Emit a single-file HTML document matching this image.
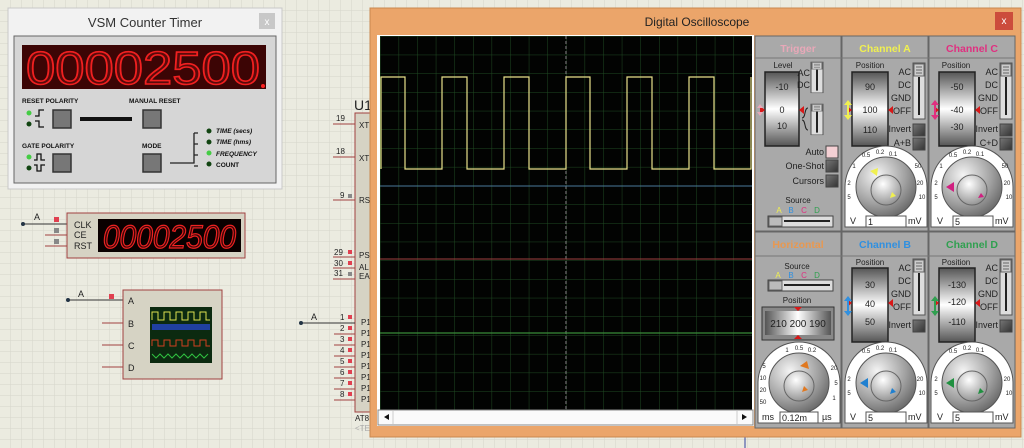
<!DOCTYPE html>
<html><head><meta charset="utf-8"><style>
html,body{margin:0;padding:0;width:1024px;height:448px;overflow:hidden;background:#ebebe0}
svg{display:block;font-family:"Liberation Sans",sans-serif}
</style></head><body>
<svg width="1024" height="448" viewBox="0 0 1024 448" xmlns="http://www.w3.org/2000/svg">
<defs>
<pattern id="g" width="11" height="11" patternUnits="userSpaceOnUse"><path d="M11 0V11H0" fill="none" stroke="#d6d6ca" stroke-width="1"/></pattern>
<pattern id="sg" x="380" y="36" width="18.6" height="18.7" patternUnits="userSpaceOnUse"><path d="M0 0V18.7M0 0H18.6" fill="none" stroke="#1f4a22" stroke-width="1"/></pattern>
<linearGradient id="vs" x1="0" y1="0" x2="0" y2="1"><stop offset="0" stop-color="#555"/><stop offset=".5" stop-color="#fff"/><stop offset="1" stop-color="#555"/></linearGradient>
<linearGradient id="hs" x1="0" y1="0" x2="1" y2="0"><stop offset="0" stop-color="#555"/><stop offset=".5" stop-color="#fff"/><stop offset="1" stop-color="#555"/></linearGradient>
<radialGradient id="kn" cx=".35" cy=".3" r=".8"><stop offset="0" stop-color="#f4f4f4"/><stop offset=".6" stop-color="#a0a0a0"/><stop offset="1" stop-color="#606060"/></radialGradient>
<radialGradient id="kc" cx=".4" cy=".3" r=".8"><stop offset="0" stop-color="#fff"/><stop offset="1" stop-color="#888"/></radialGradient>
<linearGradient id="bt" x1="0" y1="0" x2="1" y2="1"><stop offset="0" stop-color="#777"/><stop offset="1" stop-color="#333"/></linearGradient>
<g id="knob">
<path d="M-41 40V0A41 41 0 0 1 41 0V40Z" fill="#fff" stroke="#555"/>
<circle r="30" fill="url(#kn)" stroke="#555"/>
<circle r="15" cy="3" fill="url(#kc)" stroke="#666"/>
</g>
<g id="vslide"><rect width="12" height="56" fill="#ddd" stroke="#555"/><line x1="6" y1="14" x2="6" y2="52" stroke="#222" stroke-width="2"/><rect x="1" y="1" width="10" height="12" fill="#ccc" stroke="#666"/><path d="M3 4H9M3 7H9M3 10H9" stroke="#666"/></g>
</defs>
<rect width="1024" height="448" fill="url(#g)"/>
<line x1="745" y1="428" x2="745" y2="448" stroke="#3040a0"/>

<g font-size="9" fill="#222">
<line x1="22" y1="224" x2="67" y2="224" stroke="#333"/><circle cx="23" cy="224" r="2" fill="#234"/>
<text x="34" y="220">A</text><rect x="54" y="217" width="5" height="5" fill="#e04050"/>
<rect x="54" y="228" width="5" height="5" fill="#888"/><rect x="54" y="239" width="5" height="5" fill="#888"/>
<line x1="45" y1="235" x2="67" y2="235" stroke="#a04040"/><line x1="45" y1="246" x2="67" y2="246" stroke="#a04040"/>
<rect x="67" y="213" width="178" height="45" fill="#d6d3c4" stroke="#a04040"/>
<text x="74" y="228">CLK</text><text x="74" y="238">CE</text><text x="74" y="249">RST</text>
<rect x="98" y="219" width="143" height="33" fill="#0a0000"/>
<text x="103" y="248" font-size="32" fill="#3a0606" stroke="#e22" stroke-width="1.2" textLength="133" lengthAdjust="spacingAndGlyphs" font-style="italic">00002500</text>

<line x1="67" y1="300" x2="123" y2="300" stroke="#333"/><circle cx="68" cy="300" r="2" fill="#234"/>
<text x="78" y="297">A</text><rect x="109" y="294" width="5" height="5" fill="#e04050"/>
<line x1="102" y1="323" x2="123" y2="323" stroke="#a04040"/><line x1="102" y1="345" x2="123" y2="345" stroke="#a04040"/><line x1="102" y1="367" x2="123" y2="367" stroke="#a04040"/>
<rect x="123" y="290" width="99" height="89" fill="#d6d3c4" stroke="#a04040"/>
<text x="128" y="304">A</text><text x="128" y="327">B</text><text x="128" y="349">C</text><text x="128" y="371">D</text>
<rect x="150" y="307" width="62" height="56" fill="#0c2a10"/>
<path d="M152 320V312H158V320H164V312H170V320H176V312H182V320H188V312H194V320H200V312H206V320H210" fill="none" stroke="#dde050"/>
<rect x="152" y="324" width="58" height="6" fill="#2040a0"/>
<path d="M152 346V340H158V346H164V340H170V346H176V340H182V346H188V340H194V346H200V340H206V346H210" fill="none" stroke="#d04020"/>
<path d="M152 354L156 358L160 354L164 358L168 354L172 358L176 354L180 358L184 354L188 358L192 354L196 358L200 354L204 358L208 354" fill="none" stroke="#30c040"/>

<text x="354" y="110" font-size="14">U1</text>
<rect x="355" y="113" width="20" height="299" fill="#d6d3c4" stroke="#a04040"/>
<text x="359" y="128" font-size="8">XT</text><text x="359" y="161" font-size="8">XT</text><text x="359" y="203" font-size="8">RS</text>
<text x="359" y="258" font-size="8">PS</text><text x="359" y="270" font-size="8">AL</text><text x="359" y="279" font-size="8">EA</text>
<line x1="333" y1="124" x2="355" y2="124" stroke="#a04040"/><text x="336" y="121" font-size="8">19</text>
<line x1="333" y1="157" x2="355" y2="157" stroke="#a04040"/><text x="336" y="154" font-size="8">18</text>
<line x1="333" y1="200" x2="355" y2="200" stroke="#a04040"/><text x="340" y="198" font-size="8">9</text><rect x="348" y="194" width="4" height="4" fill="#888"/>
<g font-size="8">
<text x="334" y="255">29</text><rect x="348" y="250" width="4" height="4" fill="#e04050"/><line x1="333" y1="257" x2="355" y2="257" stroke="#a04040"/>
<text x="334" y="266">30</text><rect x="348" y="261" width="4" height="4" fill="#e04050"/><line x1="333" y1="268" x2="355" y2="268" stroke="#a04040"/>
<text x="334" y="276">31</text><rect x="348" y="272" width="4" height="4" fill="#888"/><line x1="333" y1="279" x2="355" y2="279" stroke="#a04040"/>
</g>
<line x1="300" y1="323" x2="355" y2="323" stroke="#333"/><circle cx="301" cy="323" r="2" fill="#234"/><text x="311" y="320">A</text>
<g font-size="8">
<text x="340" y="320">1</text><text x="340" y="331">2</text><text x="340" y="342">3</text><text x="340" y="353">4</text><text x="340" y="364">5</text><text x="340" y="375">6</text><text x="340" y="386">7</text><text x="340" y="397">8</text>
<text x="361" y="325">P1</text><text x="361" y="336">P1</text><text x="361" y="347">P1</text><text x="361" y="358">P1</text><text x="361" y="369">P1</text><text x="361" y="380">P1</text><text x="361" y="391">P1</text><text x="361" y="402">P1</text>
<text x="355" y="421" font-size="8">AT8</text><text x="355" y="431" font-size="8" fill="#aaa">&lt;TE</text>
</g>
<g fill="#e04050"><rect x="348" y="315" width="4" height="4"/><rect x="348" y="326" width="4" height="4"/><rect x="348" y="337" width="4" height="4"/><rect x="348" y="348" width="4" height="4"/><rect x="348" y="359" width="4" height="4"/><rect x="348" y="370" width="4" height="4"/><rect x="348" y="381" width="4" height="4"/><rect x="348" y="392" width="4" height="4"/></g>
<g stroke="#a04040"><line x1="334" y1="334" x2="355" y2="334"/><line x1="334" y1="345" x2="355" y2="345"/><line x1="334" y1="356" x2="355" y2="356"/><line x1="334" y1="367" x2="355" y2="367"/><line x1="334" y1="378" x2="355" y2="378"/><line x1="334" y1="389" x2="355" y2="389"/><line x1="334" y1="400" x2="355" y2="400"/></g>
</g>

<rect x="8" y="8" width="274" height="181" fill="#f2f2f2" stroke="#c8c8c8"/>
<text x="145" y="27" font-size="13" text-anchor="middle" fill="#333">VSM Counter Timer</text>
<rect x="259" y="13" width="16" height="16" fill="#c8c8c8"/><text x="267" y="25" font-size="10" fill="#fff" text-anchor="middle">x</text>
<rect x="14" y="36" width="262" height="147" fill="#d6d6d6" stroke="#666"/>
<rect x="22" y="45" width="244" height="44" fill="#3c0505"/>
<text x="26" y="84" font-size="46" fill="#5a0a0a" stroke="#f02020" stroke-width="1.6" textLength="234" lengthAdjust="spacingAndGlyphs">00002500</text>
<circle cx="263" cy="86" r="2" fill="#f22"/>
<g font-size="6.5" font-weight="bold" fill="#111">
<text x="22" y="103">RESET POLARITY</text><text x="129" y="103">MANUAL RESET</text>
<text x="22" y="148">GATE POLARITY</text><text x="142" y="148">MODE</text>
<text x="216" y="133" font-style="italic">TIME (secs)</text><text x="216" y="144" font-style="italic">TIME (hms)</text>
<text x="216" y="156" font-style="italic">FREQUENCY</text><text x="216" y="167">COUNT</text>
</g>
<g stroke="#333" stroke-width="1.5" fill="#777">
<rect x="53" y="110" width="18" height="18"/><rect x="143" y="110" width="18" height="18"/>
<rect x="53" y="154" width="18" height="18"/><rect x="143" y="154" width="18" height="18"/>
</g>
<rect x="80" y="117" width="52" height="4" fill="#111"/>
<circle cx="29" cy="113" r="2.5" fill="#4c4"/><circle cx="29" cy="124" r="2.5" fill="#141"/>
<circle cx="29" cy="157" r="2.5" fill="#4c4"/><circle cx="29" cy="168" r="2.5" fill="#141"/>
<path d="M35 116H39V110H44M35 121H39V127H44M34 160H37V154H41V160H45M34 165H37V171H41V165H45" fill="none" stroke="#111" stroke-width="1.3"/>
<path d="M170 163H194V133M194 133H198M194 144H198M194 155H198M194 166H198" fill="none" stroke="#222" stroke-width="1.3"/>
<circle cx="209" cy="131" r="2.5" fill="#141"/><circle cx="209" cy="142" r="2.5" fill="#141"/><circle cx="209" cy="153" r="2.5" fill="#4c4"/><circle cx="209" cy="164" r="2.5" fill="#141"/>

<rect x="370" y="8" width="651" height="429" fill="#eba56a" stroke="#c8884f"/>
<text x="697" y="26" font-size="12" text-anchor="middle" fill="#222">Digital Oscilloscope</text>
<rect x="995" y="12" width="18" height="18" fill="#cc4c3c"/><text x="1004" y="24" font-size="10" fill="#fff" text-anchor="middle">x</text>
<rect x="377" y="35" width="377" height="391" fill="#fff"/>
<rect x="380" y="36" width="372" height="374" fill="#020302"/>
<rect x="380" y="36" width="372" height="374" fill="url(#sg)"/>
<line x1="566" y1="36" x2="566" y2="410" stroke="#888" stroke-dasharray="3,2"/>
<line x1="380" y1="186" x2="752" y2="186" stroke="#4a7a9a"/>
<line x1="380" y1="259" x2="752" y2="259" stroke="#a04040"/>
<line x1="380" y1="333" x2="752" y2="333" stroke="#3a8a3a" stroke-width="1.2"/>
<path d="M381 169V77H405V169H442V77H467V169H504V77H529V169H566V77H590V169H627V77H652V169H689V77H714V169H751V77" fill="none" stroke="#e8e08a" stroke-width="1.2"/>
<rect x="378" y="410" width="375" height="15" fill="#fafafa" stroke="#888"/>
<path d="M384 417L389 414V420Z M747 417L742 414V420Z" fill="#111"/>
<line x1="393" y1="411" x2="393" y2="424" stroke="#ccc"/><line x1="737" y1="411" x2="737" y2="424" stroke="#ccc"/>

<g stroke="#666">
<rect x="755" y="36" width="86" height="195" fill="#a9a9a9"/><rect x="842" y="36" width="86" height="195" fill="#a9a9a9"/><rect x="929" y="36" width="86" height="195" fill="#a9a9a9"/>
<rect x="755" y="232" width="86" height="196" fill="#a9a9a9"/><rect x="842" y="232" width="86" height="196" fill="#a9a9a9"/><rect x="929" y="232" width="86" height="196" fill="#a9a9a9"/>
</g>
<g stroke="#777" stroke-width="1"><line x1="755" y1="58" x2="1015" y2="58"/><line x1="755" y1="256" x2="1015" y2="256"/></g>
<g font-size="10.5" font-weight="bold" text-anchor="middle">
<text x="798" y="52" fill="#e8a8b8">Trigger</text><text x="885" y="52" fill="#f0f050">Channel A</text><text x="972" y="52" fill="#e03080">Channel C</text>
<text x="798" y="248" fill="#e89850">Horizontal</text><text x="885" y="248" fill="#3090e0">Channel B</text><text x="972" y="248" fill="#30a050">Channel D</text>
</g>

<g font-size="8" fill="#222" text-anchor="middle">
<text x="783" y="68">Level</text><text x="870" y="68">Position</text><text x="956" y="68">Position</text>
<text x="870" y="265">Position</text><text x="956" y="265">Position</text>
</g>
<g stroke="#222" stroke-width="1.5">
<rect x="765" y="72" width="34" height="74" fill="url(#vs)"/><rect x="852" y="72" width="36" height="74" fill="url(#vs)"/><rect x="939" y="72" width="36" height="74" fill="url(#vs)"/>
<rect x="852" y="268" width="36" height="74" fill="url(#vs)"/><rect x="939" y="268" width="36" height="74" fill="url(#vs)"/>
</g>
<g font-size="9" fill="#222" text-anchor="middle">
<text x="782" y="90">-10</text><text x="782" y="113">0</text><text x="782" y="129">10</text>
<text x="870" y="90">90</text><text x="870" y="113">100</text><text x="870" y="133">110</text>
<text x="957" y="90">-50</text><text x="957" y="113">-40</text><text x="957" y="130">-30</text>
<text x="870" y="288">30</text><text x="870" y="307">40</text><text x="870" y="325">50</text>
<text x="957" y="288">-130</text><text x="957" y="305">-120</text><text x="957" y="325">-110</text>
</g>
<g fill="#d81818">
<path d="M765 110l-5-4v8zM799 110l5-4v8zM852 110l-5-4v8zM888 110l5-4v8zM939 110l-5-4v8zM975 110l5-4v8zM852 303l-5-4v8zM888 303l5-4v8zM939 303l-5-4v8zM975 303l5-4v8z"/>
</g>
<path d="M848 100l-4 5h8zM848 120l-4-5h8z" fill="#f0f050"/><rect x="847" y="104" width="2" height="12" fill="#f0f050"/>
<path d="M935 100l-4 5h8zM935 120l-4-5h8z" fill="#e03080"/><rect x="934" y="104" width="2" height="12" fill="#e03080"/>
<path d="M848 296l-4 5h8zM848 316l-4-5h8z" fill="#3090e0"/><rect x="847" y="300" width="2" height="12" fill="#3090e0"/>
<path d="M935 296l-4 5h8zM935 316l-4-5h8z" fill="#30a050"/><rect x="934" y="300" width="2" height="12" fill="#30a050"/>
<path d="M760 104l-3 4h6zM760 116l-3-4h6z" fill="#e8a8b8"/>

<use href="#vslide" x="913" y="63"/><use href="#vslide" x="1000" y="63"/>
<use href="#vslide" x="913" y="259"/><use href="#vslide" x="1000" y="259"/>
<g transform="translate(811 62) scale(1 .55)"><use href="#vslide"/></g>
<g transform="translate(811 104) scale(1 .55)"><use href="#vslide"/></g>
<path d="M808 108c-4 0-2 10-6 10M802 120c4 0 2 10 6 10" fill="none" stroke="#222"/>
<g font-size="9" fill="#222" text-anchor="end">
<text x="810" y="76">AC</text><text x="810" y="88">DC</text>
<text x="911" y="75">AC</text><text x="911" y="88">DC</text><text x="911" y="101">GND</text><text x="911" y="114">OFF</text>
<text x="998" y="75">AC</text><text x="998" y="88">DC</text><text x="998" y="101">GND</text><text x="998" y="114">OFF</text>
<text x="911" y="271">AC</text><text x="911" y="284">DC</text><text x="911" y="297">GND</text><text x="911" y="310">OFF</text>
<text x="998" y="271">AC</text><text x="998" y="284">DC</text><text x="998" y="297">GND</text><text x="998" y="310">OFF</text>
<text x="911" y="132">Invert</text><text x="911" y="146">A+B</text>
<text x="998" y="132">Invert</text><text x="998" y="146">C+D</text>
<text x="911" y="328">Invert</text><text x="998" y="328">Invert</text>
<text x="824" y="155">Auto</text><text x="824" y="169">One-Shot</text><text x="824" y="184">Cursors</text>
</g>
<g stroke="#444">
<rect x="913" y="124" width="12" height="12" fill="url(#bt)"/><rect x="913" y="138" width="12" height="12" fill="url(#bt)"/>
<rect x="1000" y="124" width="12" height="12" fill="url(#bt)"/><rect x="1000" y="138" width="12" height="12" fill="url(#bt)"/>
<rect x="913" y="320" width="12" height="12" fill="url(#bt)"/><rect x="1000" y="320" width="12" height="12" fill="url(#bt)"/>
<rect x="826" y="146" width="12" height="12" fill="#f4d0d4"/><rect x="826" y="160" width="12" height="12" fill="url(#bt)"/><rect x="826" y="175" width="12" height="12" fill="url(#bt)"/>
</g>
<g font-size="8" text-anchor="middle">
<text x="798" y="203" fill="#222">Source</text>
<text x="779" y="213" fill="#f0f050">A</text><text x="791" y="213" fill="#3090e0">B</text><text x="804" y="213" fill="#e03080">C</text><text x="817" y="213" fill="#30a050">D</text>
<text x="797" y="269" fill="#222">Source</text>
<text x="778" y="278" fill="#f0f050">A</text><text x="791" y="278" fill="#3090e0">B</text><text x="804" y="278" fill="#e03080">C</text><text x="817" y="278" fill="#30a050">D</text>
<text x="797" y="303" fill="#222">Position</text>
</g>
<g stroke="#444"><rect x="768" y="216" width="65" height="11" fill="#ddd"/><rect x="768" y="280" width="65" height="11" fill="#ddd"/></g>
<rect x="769" y="217" width="13" height="9" fill="#bbb" stroke="#666"/><rect x="769" y="281" width="13" height="9" fill="#bbb" stroke="#666"/>
<line x1="784" y1="221" x2="830" y2="221" stroke="#222" stroke-width="2"/><line x1="784" y1="285" x2="830" y2="285" stroke="#222" stroke-width="2"/>
<rect x="762" y="307" width="72" height="33" fill="#888" stroke="#333"/>
<rect x="765" y="311" width="66" height="24" fill="url(#hs)"/>
<text x="798" y="327" font-size="10" text-anchor="middle" fill="#222">210 200 190</text>
<path d="M798 311l-4-4h8zM798 335l-4 4h8z" fill="#d81818"/>

<use href="#knob" x="886" y="187"/><use href="#knob" x="972" y="187"/>
<use href="#knob" x="886" y="383"/><use href="#knob" x="972" y="383"/><use href="#knob" x="799" y="383"/>
<g stroke="#555" fill="#fff">
<rect x="866" y="216" width="40" height="11"/><rect x="953" y="216" width="40" height="11"/>
<rect x="866" y="412" width="40" height="11"/><rect x="953" y="412" width="40" height="11"/><rect x="780" y="412" width="38" height="11"/>
</g>
<g font-size="9" fill="#222">
<text x="868" y="225">1</text><text x="955" y="225">5</text><text x="868" y="421">5</text><text x="955" y="421">5</text><text x="782" y="421">0.12m</text>
<text x="850" y="224">V</text><text x="908" y="224">mV</text><text x="937" y="224">V</text><text x="995" y="224">mV</text>
<text x="850" y="420">V</text><text x="908" y="420">mV</text><text x="937" y="420">V</text><text x="995" y="420">mV</text>
<text x="762" y="420">ms</text><text x="822" y="420">µs</text>
</g>
<g font-size="6" fill="#222" text-anchor="middle">
<text x="866" y="157">0.5</text><text x="880" y="154">0.2</text><text x="893" y="156">0.1</text><text x="854" y="168">1</text><text x="849" y="185">2</text><text x="849" y="199">5</text><text x="920" y="185">20</text><text x="922" y="199">10</text><text x="918" y="168">50</text>
<text x="953" y="157">0.5</text><text x="967" y="154">0.2</text><text x="980" y="156">0.1</text><text x="941" y="168">1</text><text x="936" y="185">2</text><text x="936" y="199">5</text><text x="1007" y="185">20</text><text x="1009" y="199">10</text><text x="1005" y="168">50</text>
<text x="866" y="353">0.5</text><text x="880" y="350">0.2</text><text x="893" y="352">0.1</text><text x="849" y="381">2</text><text x="849" y="395">5</text><text x="920" y="381">20</text><text x="922" y="395">10</text>
<text x="953" y="353">0.5</text><text x="967" y="350">0.2</text><text x="980" y="352">0.1</text><text x="936" y="381">2</text><text x="936" y="395">5</text><text x="1007" y="381">20</text><text x="1009" y="395">10</text>
<text x="787" y="352">1</text><text x="799" y="350">0.5</text><text x="812" y="352">0.2</text><text x="764" y="368">5</text><text x="763" y="380">10</text><text x="763" y="392">20</text><text x="763" y="404">50</text><text x="834" y="370">20</text><text x="836" y="385">5</text><text x="834" y="400">1</text>
</g>
<g>
<path d="M870 171l8-3-1 8z" fill="#f0f050"/><path d="M896 196l-6 2 2-6z" fill="#f0f050"/>
<path d="M946 187l8-5v10z" fill="#d02080"/><path d="M984 197l-6 1 3-5z" fill="#d02080"/>
<path d="M860 383l8-5v10z" fill="#2080d0"/><path d="M896 392l-6 2 2-6z" fill="#2080d0"/>
<path d="M946 383l8-5v10z" fill="#209040"/><path d="M984 392l-6 2 2-6z" fill="#209040"/>
<path d="M800 366l7-5 2 8z" fill="#e07820"/><path d="M808 390l-6 2 2-6z" fill="#e07820"/>
</g>
</svg>
</body></html>
